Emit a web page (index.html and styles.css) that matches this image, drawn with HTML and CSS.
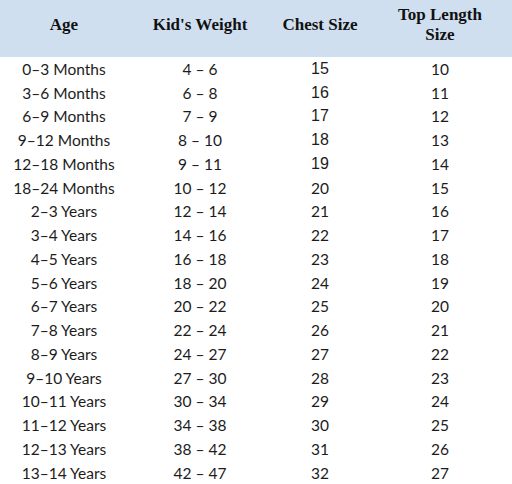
FILE: index.html
```html
<!DOCTYPE html>
<html>
<head>
<meta charset="utf-8">
<link rel="stylesheet" href="styles.css">
</head>
<body>
<table class="chart">
  <colgroup>
    <col class="c-age"><col class="c-weight"><col class="c-chest"><col class="c-top">
  </colgroup>
  <thead>
    <tr>
      <th>Age</th>
      <th>Kid's Weight</th>
      <th>Chest Size</th>
      <th>Top Length<br>Size</th>
    </tr>
  </thead>
  <tbody>
    <tr><td>0–3 Months</td><td>4 – 6</td><td class="arial">15</td><td>10</td></tr>
    <tr><td>3–6 Months</td><td>6 – 8</td><td class="arial">16</td><td>11</td></tr>
    <tr><td>6–9 Months</td><td>7 – 9</td><td class="arial">17</td><td>12</td></tr>
    <tr><td>9–12 Months</td><td>8 – 10</td><td class="arial">18</td><td>13</td></tr>
    <tr><td>12–18 Months</td><td>9 – 11</td><td class="arial">19</td><td>14</td></tr>
    <tr><td>18–24 Months</td><td>10 – 12</td><td>20</td><td>15</td></tr>
    <tr><td>2–3 Years</td><td>12 – 14</td><td>21</td><td>16</td></tr>
    <tr><td>3–4 Years</td><td>14 – 16</td><td>22</td><td>17</td></tr>
    <tr><td>4–5 Years</td><td>16 – 18</td><td>23</td><td>18</td></tr>
    <tr><td>5–6 Years</td><td>18 – 20</td><td>24</td><td>19</td></tr>
    <tr><td>6–7 Years</td><td>20 – 22</td><td>25</td><td>20</td></tr>
    <tr><td>7–8 Years</td><td>22 – 24</td><td>26</td><td>21</td></tr>
    <tr><td>8–9 Years</td><td>24 – 27</td><td>27</td><td>22</td></tr>
    <tr><td>9–10 Years</td><td>27 – 30</td><td>28</td><td>23</td></tr>
    <tr><td>10–11 Years</td><td>30 – 34</td><td>29</td><td>24</td></tr>
    <tr><td>11–12 Years</td><td>34 – 38</td><td>30</td><td>25</td></tr>
    <tr><td>12–13 Years</td><td>38 – 42</td><td>31</td><td>26</td></tr>
    <tr><td>13–14 Years</td><td>42 – 47</td><td>32</td><td>27</td></tr>
  </tbody>
</table>
</body>
</html>
```
FILE: styles.css
```css
html, body {
  margin: 0;
  padding: 0;
  background: #ffffff;
}
.chart {
  width: 512px;
  border-collapse: collapse;
  table-layout: fixed;
}
.c-age { width: 128px; }
.c-weight { width: 144px; }
.c-chest { width: 96px; }
.c-top { width: 144px; }
.chart th {
  height: 57px;
  padding: 0 0 8px 0;
  box-sizing: border-box;
  background: #cfdff0;
  font-family: "Liberation Serif", "Times New Roman", serif;
  font-weight: bold;
  font-size: 17px;
  line-height: 20px;
  color: #111111;
  text-align: center;
  vertical-align: middle;
}
.chart td {
  height: 23.75px;
  padding: 0;
  font-family: Lato, "Open Sans", sans-serif;
  font-size: 15.5px;
  color: #1c1c1c;
  text-align: center;
  vertical-align: middle;
  white-space: nowrap;
}
.chart td.arial {
  font-family: "Liberation Sans", Arial, sans-serif;
  font-size: 16px;
}
```
